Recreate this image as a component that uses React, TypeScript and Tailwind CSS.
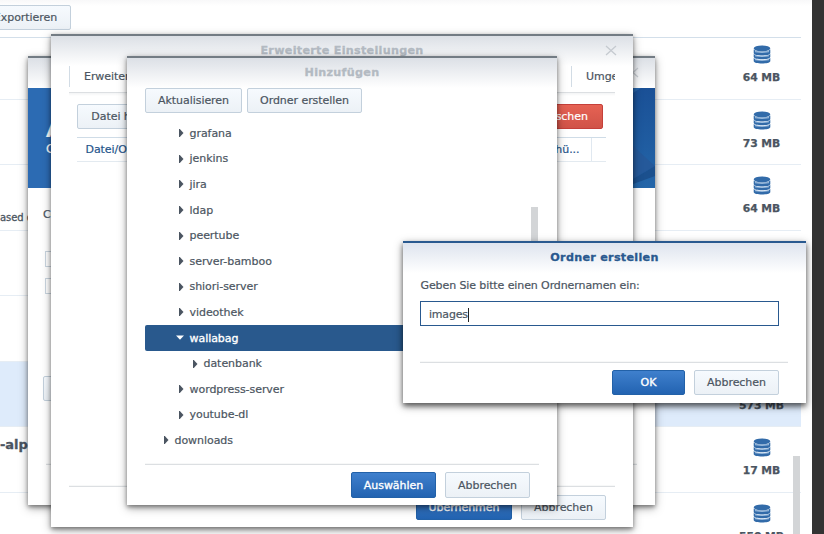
import React from "react";

type Tone = "light" | "blue" | "red";

const tones: Record<Tone, string> = {
  light: "border-[#c3d0dc] bg-linear-to-b from-[#f6fafe] to-[#ecf1f6] text-[#4b5561]",
  blue: "border-[#2261a8] bg-linear-to-b from-[#3f80cd] to-[#2263b1] text-white [-webkit-text-stroke:0.35px_white]",
  red: "border-[#c5403a] bg-linear-to-b from-[#e66253] to-[#d05348] text-white",
};

function Button({ tone = "light", className = "", children }: { tone?: Tone; className?: string; children?: React.ReactNode }) {
  return (
    <button className={`flex h-[25px] shrink-0 items-center justify-center rounded-[2px] border whitespace-nowrap ${tones[tone]} ${className}`}>
      <span className="pt-[1.5px]">{children}</span>
    </button>
  );
}

function CloseIcon({ className = "" }: { className?: string }) {
  return (
    <svg className={className} width="12" height="11" viewBox="0 0 12 11" fill="none" stroke="#c5cad0" strokeWidth="1.3">
      <path d="M1 1 L11 10 M11 1 L1 10" />
    </svg>
  );
}

function Dialog({ title, className, active = false, close = false, children }: { title?: string; className: string; active?: boolean; close?: boolean; children: React.ReactNode }) {
  return (
    <section
      className={`absolute flex flex-col border-t-2 bg-white ${
        active
          ? "border-[#29598f] shadow-[0_3px_5px_rgba(0,0,0,0.5),0_3px_9px_rgba(0,0,0,0.35)]"
          : "border-[#737c84] shadow-[0_2px_4px_rgba(0,0,0,0.38),0_3px_9px_rgba(0,0,0,0.35)]"
      } ${className}`}
    >
      <header
        className={`relative flex h-[30px] shrink-0 justify-center bg-linear-to-b to-white pt-[7px] text-[11.2px] leading-[16px] font-bold tracking-[0.28px] ${
          active
            ? "from-[#dee4ee] text-[#29598f] [-webkit-text-stroke:0.3px_#29598f]"
            : "from-[#dce0e6] text-[#b3bac2] [-webkit-text-stroke:0.3px_#b3bac2]"
        }`}
      >
        {title}
        {close && <CloseIcon className="absolute top-[9px] right-[16px]" />}
      </header>
      {children}
    </section>
  );
}

function DatabaseIcon() {
  return (
    <svg width="18" height="19" viewBox="0 0 18 19" fill="#326ba9">
      <ellipse cx="9" cy="3.4" rx="8.3" ry="2.9" />
      <path d="M.7 4.500C2.200 6.200 5.500 6.600 9 6.600s6.800-.4 8.300-2.100v3.800C16.800 9.900 13.300 10.500 9 10.500S1.200 9.900.7 8.300z" />
      <path d="M.7 8.900c1.500 1.700 4.800 2.200 8.300 2.200s6.800-.5 8.300-2.200v3.200c-.5 1.600-4 2.200-8.300 2.200s-7.800-.6-8.300-2.200z" />
      <path d="M.7 12.900c1.500 1.700 4.800 2.200 8.300 2.200s6.800-.5 8.300-2.200v3.400c-.5 1.600-4 2.200-8.300 2.200s-7.800-.6-8.300-2.200z" />
      <path d="M2 6.700q7 1.300 14 0M2 10.800q7 1.300 14 0M2 14.700q7 1.300 14 0" fill="none" stroke="#b9d2ec" strokeWidth=".9" />
    </svg>
  );
}

const images = [
  { size: "64 MB" },
  { size: "73 MB" },
  { size: "64 MB", note: "ased on" },
  { size: "" },
  { size: "" },
  { size: "573 MB", selected: true },
  { size: "17 MB", name: "-alpine" },
  { size: "550 MB" },
];

function ImageList() {
  return (
    <div className="relative h-[497px] w-[801px] overflow-hidden border-t border-[#d3dfea]">
      <div className="-mt-[4px]">
        {images.map((image, i) => (
          <div
            key={i}
            className={`flex h-[65.5px] items-start justify-between border-b border-[#e6edf4] ${image.selected ? "bg-[#deebfb]" : ""}`}
          >
            <div className="pt-[12px]">
              {image.note && <p className="pt-[34px] text-[10px] leading-[13px] [-webkit-text-stroke:0.3px_#4b5561]">{image.note}</p>}
              {image.name && <p className="-mt-[2px] text-[13px] leading-[16px] font-bold [-webkit-text-stroke:0.3px_#4b5561]">{image.name}</p>}
            </div>
            {image.size && (
              <div className="flex w-[79px] flex-col items-center pt-[11px]">
                <DatabaseIcon />
                <span className="mt-[7px] text-[10.8px] leading-[14px] font-bold [-webkit-text-stroke:0.25px_#4b5561]">{image.size}</span>
              </div>
            )}
          </div>
        ))}
      </div>
      <div className="absolute top-[418px] right-[1px] h-[90px] w-[7px] bg-[#d3d5d7]" />
    </div>
  );
}

const folders = [
  { name: "grafana", pad: "pl-[34px]" },
  { name: "jenkins", pad: "pl-[34px]" },
  { name: "jira", pad: "pl-[34px]" },
  { name: "ldap", pad: "pl-[34px]" },
  { name: "peertube", pad: "pl-[34px]" },
  { name: "server-bamboo", pad: "pl-[34px]" },
  { name: "shiori-server", pad: "pl-[34px]" },
  { name: "videothek", pad: "pl-[34px]" },
  { name: "wallabag", pad: "pl-[31px]", open: true },
  { name: "datenbank", pad: "pl-[48px]" },
  { name: "wordpress-server", pad: "pl-[34px]" },
  { name: "youtube-dl", pad: "pl-[34px]" },
  { name: "downloads", pad: "pl-[19px]" },
];

function FolderTree() {
  return (
    <ul className="mt-[7.4px] h-[333px]">
      {folders.map((f) => (
        <li
          key={f.name}
          className={`flex h-[25.6px] items-center rounded-[2px] ${f.pad} ${
            f.open ? "gap-[5.5px] bg-[#29598d] text-white [-webkit-text-stroke:0.35px_white]" : "gap-[6px]"
          }`}
        >
          {f.open ? (
            <svg width="8" height="5" viewBox="0 0 8 5" fill="white"><path d="M0 .5h8L4 4.700z" /></svg>
          ) : (
            <svg width="4.5" height="8" viewBox="0 0 4.5 8" fill="#4b5561"><path d="M0 0h.8L4.500 4L.8 8H0z" /></svg>
          )}
          <span className="pt-[1.4px]">{f.name}</span>
        </li>
      ))}
    </ul>
  );
}

function Rule({ className = "" }: { className?: string }) {
  return <div className={`h-[2px] shrink-0 border-b border-[#dcdfe2] bg-[#f7f8f8] ${className}`} />;
}

export default function App() {
  return (
    <main className="relative h-[534px] w-[824px] overflow-hidden bg-[#333333] font-['DejaVu_Sans',Verdana,sans-serif] text-[11px] leading-[14px] tracking-[-0.05px] text-[#4b5561] [-webkit-text-stroke:0.2px]">
      <div className="h-full w-[812px] bg-white bg-linear-to-b from-[#f8f8f9] from-0% to-white to-[6px]">
        <div className="flex h-[37px] pt-[5px]">
          <Button className="-ml-[20px] w-[91px]">Exportieren</Button>
        </div>
        <ImageList />
      </div>

      <Dialog className="top-[56px] left-[28px] h-[449px] w-[627px]" close>
        <div className="flex h-[100px] shrink-0 justify-between bg-[#2c6bb3] text-white">
          <div className="pt-[32px] pl-[18px]">
            <p className="text-[20px] leading-[20px] font-bold">A</p>
            <p className="mt-[2px] text-[12px] leading-[14px]">Container</p>
          </div>
          <svg width="140" height="100" viewBox="0 0 140 100">
            <defs>
              <linearGradient id="banner" x1="0" y1="0" x2="0" y2="1">
                <stop offset="0" stopColor="#1a5096" />
                <stop offset="1" stopColor="#2466a9" />
              </linearGradient>
            </defs>
            <rect width="140" height="100" fill="url(#banner)" />
            <path d="M118 0h8l-8 5z" fill="#2764a8" />
            <path d="M118 58l22 20-22 13z" fill="#25599a" />
            <path d="M118 91l22-13v10l-22 8z" fill="#1b508e" />
          </svg>
        </div>
        <div className="flex h-[275px] shrink-0 flex-col pl-[15px]">
          <p className="mt-[20px]">Container</p>
          <div className="mt-[29px] ml-[2px] h-[16px] w-[16px] border border-[#c9d5df]" />
          <div className="mt-[11px] ml-[2px] h-[16px] w-[16px] border border-[#c9d5df]" />
          <Button className="mt-[82px] w-[90px]" />
        </div>
        <Rule className="mr-[18px] ml-[18px]" />
      </Dialog>

      <Dialog title="Erweiterte Einstellungen" className="top-[34px] left-[51px] h-[493px] w-[582px]" close>
        <nav className="mx-[18px] flex h-[27px] shrink-0 justify-between overflow-hidden border-b border-[#dcdfe2]">
          <div className="h-[21px] border-l border-[#d2dce5] pt-[4px] pl-[14px]">Erweiterte Einstellungen</div>
          <div className="h-[21px] w-[44px] overflow-hidden border-l border-[#d2dce5] pt-[4px] pl-[14px]">Umgebung</div>
        </nav>
        <div className="mx-[18px] h-[3px] shrink-0 bg-linear-to-b from-[#f3f4f5] to-white" />
        <div className="mt-[8px] mr-[30px] ml-[26px] flex shrink-0 justify-between">
          <Button className="w-[122px]">Datei hinzufügen</Button>
          <Button tone="red" className="w-[80px] pl-[5px]">Löschen</Button>
        </div>
        <div className="mt-[8px] mr-[27px] ml-[26px] flex h-[25px] shrink-0 items-stretch justify-between border-t border-b border-t-[#cfdce7] border-b-[#e3eaf0] leading-[23px] text-[#25558b]">
          <span className="pl-[8.500px]">Datei/Ordner</span>
          <span className="mr-[14px] border-r border-[#e0e8f0] pr-[11.500px]">Schreibgeschü...</span>
        </div>
        <div className="grow" />
        <Rule className="mx-[18px]" />
        <footer className="mt-[8px] mr-[27px] mb-[7px] flex shrink-0 justify-end gap-[9px]">
          <Button tone="blue" className="w-[96px]">Übernehmen</Button>
          <Button className="w-[85px]">Abbrechen</Button>
        </footer>
      </Dialog>

      <Dialog title="Hinzufügen" className="top-[56px] left-[127px] h-[449px] w-[430px]">
        <div className="ml-[18px] flex gap-[5px]">
          <Button className="w-[97px]">Aktualisieren</Button>
          <Button className="w-[115px]">Ordner erstellen</Button>
        </div>
        <div className="relative mr-[18px] ml-[18px]">
          <FolderTree />
          <div className="absolute top-[94px] right-[1px] h-[110px] w-[7px] bg-[#d3d5d7]" />
        </div>
        <div className="grow" />
        <Rule className="mx-[18px]" />
        <footer className="mt-[7px] mr-[27px] mb-[7px] flex shrink-0 justify-end gap-[9px]">
          <Button tone="blue" className="h-[26px] w-[85px]">Auswählen</Button>
          <Button className="h-[26px] w-[85px]">Abbrechen</Button>
        </footer>
      </Dialog>

      <Dialog title="Ordner erstellen" active className="top-[241px] left-[403px] h-[162px] w-[403px]">
        <label className="mt-[6px] ml-[17.5px] tracking-[-0.1px]">Geben Sie bitte einen Ordnernamen ein:</label>
        <div className="mt-[8px] mr-[27px] ml-[17px] flex h-[25px] shrink-0 items-center border border-[#29598f] pt-[3px] pl-[8px]">
          <span className="tracking-[-0.2px]">images</span>
          <span className="-mt-[1px] h-[14px] w-px bg-[#222]" />
        </div>
        <div className="grow" />
        <Rule className="mr-[18px] ml-[17px]" />
        <footer className="mt-[7px] mr-[27px] mb-[8px] flex shrink-0 justify-end gap-[9px]">
          <Button tone="blue" className="w-[73px]">OK</Button>
          <Button className="w-[85px]">Abbrechen</Button>
        </footer>
      </Dialog>
    </main>
  );
}
